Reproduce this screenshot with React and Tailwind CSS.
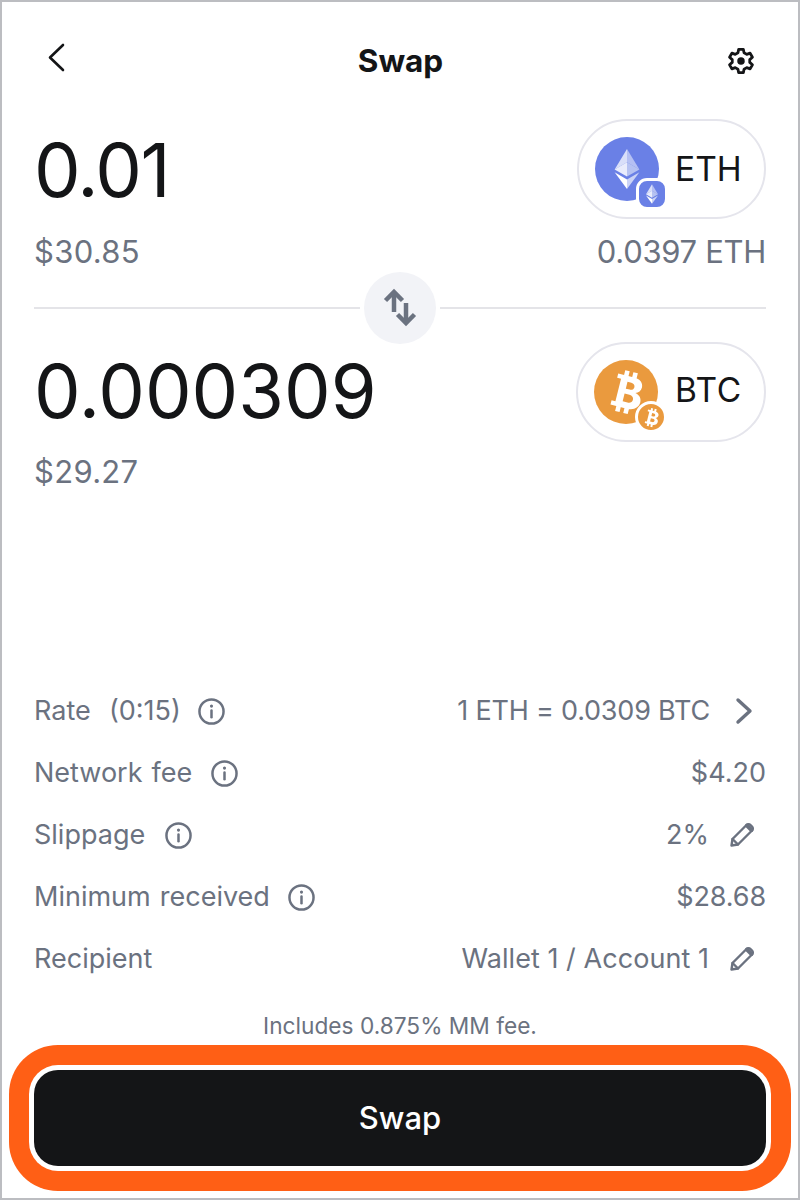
import React from "react";

const F = { fontFamily: "Inter, 'Liberation Sans', sans-serif" };

function Info() {
  return (
    <svg width="27" height="27" viewBox="0 0 26 26" fill="none" stroke="#6b7280" strokeWidth="2.400" strokeLinecap="round">
      <circle cx="13" cy="13" r="11.600" />
      <path d="M13 12v6.500" />
      <circle cx="13" cy="7.800" r="0.700" fill="#6b7280" strokeWidth="1.600" />
    </svg>
  );
}

function Pencil() {
  return (
    <svg width="26" height="26" viewBox="0 0 26 26" fill="none" stroke="#6b7280" strokeWidth="2.400" strokeLinejoin="round" strokeLinecap="round">
      <path d="M2.500 23.500l1-6.500L17.500 3a2.800 2.800 0 0 1 4 0l1.500 1.500a2.800 2.800 0 0 1 0 4L9 22.500z" />
      <path d="M18 3.500l4.500 4.500" strokeWidth="4" />
      <path d="M3.500 17l5.500 5.500" />
    </svg>
  );
}

function EthGlyph({ w, h }) {
  return (
    <svg width={w} height={h} viewBox="0 0 26 42" fill="none">
      <path d="M13 0L0 21.500 13 14z" fill="#fff" fillOpacity="0.75" />
      <path d="M13 0l13 21.500L13 14z" fill="#fff" fillOpacity="0.5" />
      <path d="M0 21.500L13 29V14z" fill="#fff" fillOpacity="0.85" />
      <path d="M26 21.500L13 29V14z" fill="#c9d2f5" fillOpacity="0.8" />
      <path d="M0 24.500L13 42V32z" fill="#fff" />
      <path d="M26 24.500L13 42V32z" fill="#fff" fillOpacity="0.65" />
    </svg>
  );
}

function BtcGlyph({ size, color }) {
  return (
    <svg width={size} height={size} viewBox="0 0 24 24" fill="#fff">
      <g transform="rotate(14 12 12)">
        <path d="M6 4h8.200c3 0 5 1.500 5 3.900 0 1.700-1 3-2.500 3.500 2.100.4 3.500 1.900 3.500 3.900 0 2.900-2.300 4.700-5.800 4.700H6v-2.200h2V6.200H6z" />
        <path d="M9 1.500h2.300V5H9zM13.200 1.500h2.300V5h-2.300zM9 19h2.300v3.500H9zM13.200 19h2.300v3.500h-2.300z" />
        <path d="M11.500 6.900v3.500h2c1.200 0 2-.7 2-1.750s-.8-1.750-2-1.750zM11.500 12.900v4h2.500c1.400 0 2.300-.8 2.300-2s-.9-2-2.300-2z" fill={color} />
      </g>
    </svg>
  );
}

function TokenPill({ symbol }) {
  const eth = symbol === "ETH";
  return (
    <div className={"flex h-[100px] items-center rounded-[50px] border-2 border-[#e5e5ec] bg-white pl-[16px] " + (eth ? "w-[189px]" : "w-[190px]")}>
      <div className={"relative flex h-[64px] w-[64px] shrink-0 items-center justify-center rounded-full " + (eth ? "bg-[#6a80e6]" : "bg-[#ea9a3e]")}>
        {eth ? <EthGlyph w={26} h={40} /> : <BtcGlyph size={48} color="#ea9a3e" />}
        {eth ? (
          <div className="absolute left-[41px] top-[41px] flex h-[32px] w-[32px] items-center justify-center rounded-[11px] border-[3px] border-white bg-[#6a80e6]">
            <EthGlyph w={12} h={20} />
          </div>
        ) : (
          <div className="absolute left-[41px] top-[41px] flex h-[32px] w-[32px] items-center justify-center rounded-full border-[3px] border-white bg-[#ea9a3e]">
            <BtcGlyph size={21} color="#ea9a3e" />
          </div>
        )}
      </div>
      <span className={"text-[33.500px] leading-none text-[#141517] " + (eth ? "ml-[16px] mt-[2px]" : "-mt-[2px] ml-[17px] tracking-[0.500px]")}>{symbol}</span>
    </div>
  );
}

function Row({ label, info, gap, children }) {
  return (
    <div className="flex h-[62px] items-center justify-between text-[27px] text-[#6b7280]">
      <div className="flex items-center [word-spacing:1.500px]">
        <span className="whitespace-pre">{label}</span>
        {info && <span className={"flex " + gap}><Info /></span>}
      </div>
      <div className="flex items-center">{children}</div>
    </div>
  );
}

export default function App() {
  return (
    <div style={F} className="flex h-[1200px] w-[800px] flex-col overflow-hidden border-2 border-[#bcbdc1] bg-white">
      <header className="flex h-[112px] shrink-0 items-center justify-between pl-[44px] pr-[43px] pt-[5px]">
        <svg className="-mt-[5px]" width="22" height="32" viewBox="0 0 22 32" fill="none" stroke="#141517" strokeWidth="2.600" strokeLinecap="round" strokeLinejoin="round">
          <path d="M17 3L4 15.500 17 28" />
        </svg>
        <h1 className="ml-[6px] text-[31.500px] font-bold text-[#141517]">Swap</h1>
        <svg width="28" height="28" viewBox="0 0 24 24" fill="none" stroke="#141517" strokeWidth="2.400" strokeLinejoin="round">
          <path d="M10 2h4l.6 3 2.300 1.300 2.900-1 2 3.500-2.300 2v2.400l2.300 2-2 3.500-2.900-1L14.600 19 14 22h-4l-.6-3-2.300-1.300-2.900 1-2-3.500 2.300-2v-2.400l-2.300-2 2-3.500 2.900 1L9.400 5z" />
          <circle cx="12" cy="12" r="3.200" fill="#141517" stroke="none" />
        </svg>
      </header>

      <div className="flex flex-col px-[32px]">
        <div className="flex items-start justify-between">
          <div>
            <div className="mt-[14px] text-[74px] leading-[84px] tracking-[-1.500px] text-[#141517]">0.01</div>
            <div className="mt-[22px] text-[31px] leading-[36px] tracking-[0.300px] text-[#6b7280]">$30.85</div>
          </div>
          <div className="flex flex-col items-end">
            <div className="mt-[5px]"><TokenPill symbol="ETH" /></div>
            <div className="mt-[15px] text-[31px] leading-[36px] tracking-[-0.300px] text-[#6b7280]">0.0397 ETH</div>
          </div>
        </div>

        <div className="mt-[2px] flex items-center">
          <div className="h-[2px] flex-1 bg-[#e4e4e8]" />
          <div className="mx-[4px] flex h-[72px] w-[72px] items-center justify-center rounded-full bg-[#f2f3f7]">
            <svg width="34" height="40" viewBox="0 0 34 40" fill="none" stroke="#6b7280" strokeWidth="4.500" strokeLinejoin="miter">
              <path d="M11 24V4" />
              <path d="M2.500 12.500L11 4l8.500 8.500" />
              <path d="M23 15v20" />
              <path d="M14.500 26.500L23 35l8.500-8.500" />
            </svg>
          </div>
          <div className="h-[2px] flex-1 bg-[#e4e4e8]" />
        </div>

        <div className="flex items-start justify-between">
          <div>
            <div className="mt-[5px] text-[74px] leading-[84px] text-[#141517]">0.000309</div>
            <div className="mt-[21px] text-[31px] leading-[36px] tracking-[0.300px] text-[#6b7280]">$29.27</div>
          </div>
          <div className="-mt-[2px]"><TokenPill symbol="BTC" /></div>
        </div>
      </div>

      <div className="mt-auto flex flex-col px-[32px] pb-[32px]">
        <Row label="Rate  (0:15)" info gap="ml-[17px]">
          <span className="tracking-[-0.200px]">1 ETH = 0.0309 BTC</span>
          <svg className="ml-[24px] mr-[12px]" width="20" height="28" viewBox="0 0 20 28" fill="none" stroke="#6b7280" strokeWidth="3.400" strokeLinecap="round" strokeLinejoin="round">
            <path d="M4 3l12 11L4 25" />
          </svg>
        </Row>
        <Row label="Network fee" info gap="ml-[19px]"><span>$4.20</span></Row>
        <Row label="Slippage" info gap="ml-[20px]">
          <span>2%</span>
          <span className="ml-[20px] mr-[11px] flex"><Pencil /></span>
        </Row>
        <Row label="Minimum received" info gap="ml-[18px]"><span className="tracking-[-0.100px]">$28.68</span></Row>
        <Row label="Recipient">
          <span className="tracking-[0.050px]">Wallet 1 / Account 1</span>
          <span className="ml-[20px] mr-[11px] flex"><Pencil /></span>
        </Row>
        <p className="mt-[20px] text-center text-[22.700px] leading-[32px] text-[#6b7280]">Includes 0.875% MM fee.</p>
        <button className="mt-[28px] flex h-[96px] items-center justify-center rounded-[24px] bg-[#141517] text-[31px] font-medium text-white shadow-[0_0_0_5px_#ffffff,0_0_0_25px_#ff5f15]">
          Swap
        </button>
      </div>
    </div>
  );
}
